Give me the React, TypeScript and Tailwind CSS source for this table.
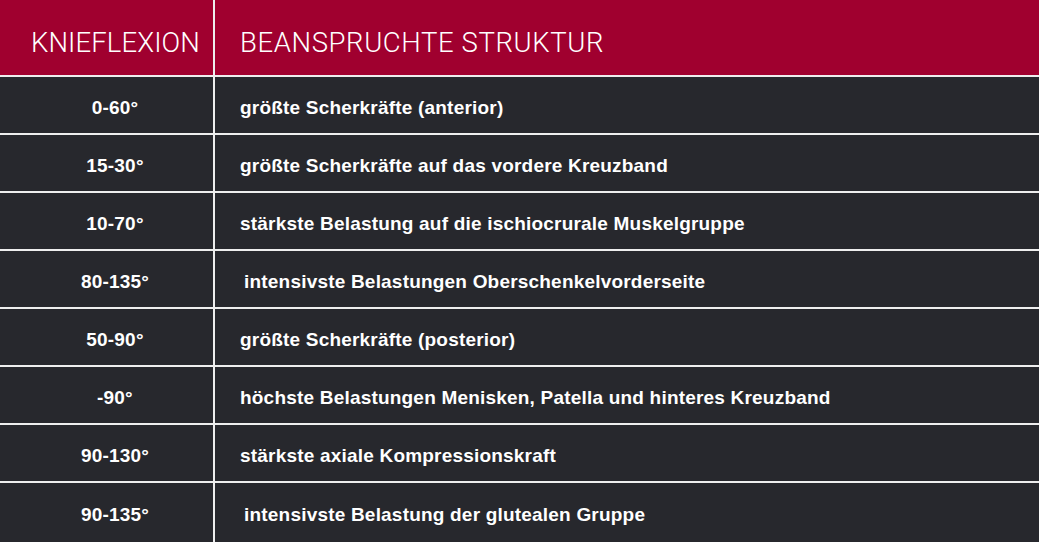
const rows = [
  { angle: '0-60°', text: 'größte Scherkräfte (anterior)' },
  { angle: '15-30°', text: 'größte Scherkräfte auf das vordere Kreuzband' },
  { angle: '10-70°', text: 'stärkste Belastung auf die ischiocrurale Muskelgruppe' },
  { angle: '80-135°', text: 'intensivste Belastungen Oberschenkelvorderseite', indent: true },
  { angle: '50-90°', text: 'größte Scherkräfte (posterior)' },
  { angle: '-90°', text: 'höchste Belastungen Menisken, Patella und hinteres Kreuzband' },
  { angle: '90-130°', text: 'stärkste axiale Kompressionskraft' },
  { angle: '90-135°', text: 'intensivste Belastung der glutealen Gruppe', indent: true },
]

export default function App() {
  return (
    <div className="w-[1039px] h-[542px] overflow-hidden bg-[#eeeeee] flex flex-col font-['Liberation_Sans',Arial,sans-serif]">
      {/* Header */}
      <div className="h-[75px] flex bg-[#a0002f] text-white font-['Roboto',sans-serif] font-light text-[27.5px]">
        <div className="w-[213px] flex items-center pl-[31px] pt-[10px] tracking-[0.1px]">KNIEFLEXION</div>
        <div className="w-[2px] bg-[#eeeeee]" />
        <div className="flex-1 flex items-center pl-[25px] pt-[10px] tracking-[0.6px]">BEANSPRUCHTE STRUKTUR</div>
      </div>

      {/* Rows */}
      <div className="flex-1 flex flex-col gap-[2px] pt-[2px]">
        {rows.map((r, i) => (
          <div
            key={r.angle}
            className={`flex bg-[#27282d] text-white font-bold text-[19px] tracking-[0.2px] ${i === rows.length - 1 ? 'flex-1' : 'h-[56px]'}`}
          >
            <div className="w-[213px] flex items-center justify-center pl-[17px] pt-[6px]">{r.angle}</div>
            <div className="w-[2px] bg-[#eeeeee]" />
            <div className={`flex-1 flex items-center pt-[6px] ${r.indent ? 'pl-[29px]' : 'pl-[25px]'}`}>{r.text}</div>
          </div>
        ))}
      </div>
    </div>
  )
}
